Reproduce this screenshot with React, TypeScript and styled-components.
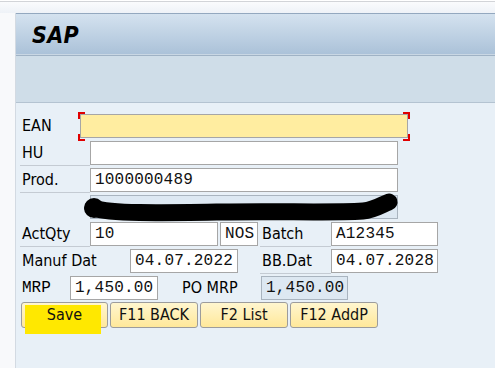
import React from "react";
import styled, { createGlobalStyle } from "styled-components";

const SANS = `"DejaVu Sans Condensed", "DejaVu Sans", "Liberation Sans", sans-serif`;
const MONO = `"Liberation Mono", "DejaVu Sans Mono", monospace`;

const Global = createGlobalStyle`
  html, body { margin: 0; padding: 0; background: #ffffff; overflow: hidden; }
`;

const Page = styled.div`
  width: 495px;
  height: 368px;
  box-sizing: border-box;
  padding-top: 1px;
  display: flex;
  flex-direction: column;
  background: #ffffff;
  font-family: ${SANS};
`;

const TopStrip = styled.div`
  height: 11px;
  border-top: 1px solid #d2d4d8;
  background: linear-gradient(#fafbfd, #eef2f7);
`;

const Main = styled.div`
  flex: 1;
  display: flex;
  min-height: 0;
`;

const Gutter = styled.div`
  width: 15px;
  background: #f8f9fb;
  border-right: 1px solid #d3dae2;
`;

const Content = styled.div`
  flex: 1;
  min-width: 0;
  display: flex;
  flex-direction: column;
  background: #e8f0f7;
`;

const TitleBar = styled.div`
  height: 41px;
  border-top: 1px solid #93a8bf;
  border-bottom: 1px solid #9fb2c5;
  box-shadow: inset 0 -1px 0 #c9d7e4;
  background: linear-gradient(#d4e2ef, #aac1d8);
  display: flex;
  align-items: center;
  padding-left: 16px;
`;

const Title = styled.span`
  font-family: ${SANS};
  font-weight: bold;
  font-style: italic;
  font-size: 23px;
  color: #000;
  letter-spacing: 0.3px;
`;

const Toolbar = styled.div`
  height: 46px;
  background: #cfdde8;
  border-bottom: 1px solid #b4c3d1;
`;

const Form = styled.div`
  display: flex;
  flex-direction: column;
  gap: 3px;
  padding: 11px 0 0 4px;
`;

const Row = styled.div`
  display: flex;
  align-items: flex-start;
  height: 24px;
`;

const Label = styled.div<{ w: number; line?: boolean; mono?: boolean }>`
  width: ${(p) => p.w}px;
  flex: none;
  box-sizing: border-box;
  height: 24px;
  padding-left: 2px;
  line-height: 24px;
  font-family: ${(p) => (p.mono ? MONO : SANS)};
  font-size: 16px;
  color: #000;
  white-space: nowrap;
  border-bottom: ${(p) => (p.line ? "1px solid #c4cbd3" : "none")};
  height: ${(p) => (p.line ? 25 : 24)}px;
`;

const Spacer = styled.div<{ w: number }>`
  width: ${(p) => p.w}px;
  flex: none;
`;

const Field = styled.div<{ w: number; tone?: "focus" | "read" | "plain" }>`
  position: relative;
  width: ${(p) => p.w}px;
  flex: none;
  height: 24px;
  box-sizing: border-box;
  border: 1px solid
    ${(p) => (p.tone === "read" ? "#a9b4bf" : "#a6a6a6")};
  background: ${(p) =>
    p.tone === "focus" ? "#ffeda0" : p.tone === "read" ? "#dde8f2" : "#ffffff"};
  font-family: ${MONO};
  font-size: 16px;
  letter-spacing: 0.2px;
  line-height: 22px;
  padding-left: 4px;
  color: #111;
  white-space: nowrap;
`;

const Corner = styled.span<{ v: "top" | "bottom"; h: "left" | "right" }>`
  position: absolute;
  width: 7px;
  height: 7px;
  ${(p) => (p.v === "top" ? "top: -3px;" : "bottom: -4px;")}
  ${(p) => (p.h === "left" ? "left: -3px;" : "right: -3px;")}
  border-${(p) => p.v}: 2px solid #e00000;
  border-${(p) => p.h}: 2px solid #e00000;
  box-sizing: border-box;
`;

const Scribble = styled.svg`
  position: absolute;
  left: -10px;
  top: -7px;
  width: 320px;
  height: 38px;
  overflow: visible;
`;

const ButtonRow = styled.div`
  display: flex;
  gap: 2px;
  padding-left: 1px;
  margin-top: -1px;
`;

const Button = styled.button<{ w: number }>`
  position: relative;
  width: ${(p) => p.w}px;
  height: 26px;
  box-sizing: border-box;
  padding: 0;
  border: 1px solid #9c9c9c;
  border-radius: 3px;
  background: linear-gradient(#fff6cf, #ffe89a);
  font-family: ${SANS};
  font-size: 16px;
  color: #111;
  line-height: 24px;
  text-align: center;
`;

const Highlight = styled.span`
  position: absolute;
  left: 3px;
  top: 2px;
  width: 76px;
  height: 29px;
  background: #ffe800;
`;

const ButtonText = styled.span`
  position: relative;
`;

export default function App() {
  return (
    <Page>
      <Global />
      <TopStrip />
      <Main>
        <Gutter />
        <Content>
          <TitleBar>
            <Title>SAP</Title>
          </TitleBar>
          <Toolbar />
          <Form>
            <Row>
              <Label w={60}>EAN</Label>
              <Field w={328} tone="focus">
                <Corner v="top" h="left" />
                <Corner v="bottom" h="left" />
                <Corner v="top" h="right" />
                <Corner v="bottom" h="right" />
              </Field>
            </Row>
            <Row>
              <Label w={70} line>HU</Label>
              <Field w={308} />
            </Row>
            <Row>
              <Label w={70} line>Prod.</Label>
              <Field w={308}>1000000489</Field>
            </Row>
            <Row>
              <Label w={70} />
              <Field w={308} tone="read">
                <Scribble viewBox="0 0 320 38">
                  <path
                    d="M 12 19 C 30 25, 80 24, 140 23 C 200 22, 250 24, 282 22 C 294 21, 302 15, 308 13"
                    fill="none"
                    stroke="#000"
                    strokeWidth={17}
                    strokeLinecap="round"
                  />
                  <circle cx={13} cy={19} r={10} fill="#000" />
                </Scribble>
              </Field>
            </Row>
            <Row>
              <Label w={70} line>ActQty</Label>
              <Field w={128}>10</Field>
              <Spacer w={2} />
              <Field w={38}>NOS</Field>
              <Spacer w={2} />
              <Label w={71} line>Batch</Label>
              <Field w={107}>A12345</Field>
            </Row>
            <Row>
              <Label w={110}>Manuf Dat</Label>
              <Field w={108}>04.07.2022</Field>
              <Spacer w={22} />
              <Label w={71} line>BB.Dat</Label>
              <Field w={107}>04.07.2028</Field>
            </Row>
            <Row>
              <Label w={50} mono>MRP</Label>
              <Field w={88}>1,450.00</Field>
              <Spacer w={22} />
              <Label w={81}>PO MRP</Label>
              <Field w={87} tone="read">1,450.00</Field>
            </Row>
            <ButtonRow>
              <Button w={87}>
                <Highlight />
                <ButtonText>Save</ButtonText>
              </Button>
              <Button w={88}>
                <ButtonText>F11 BACK</ButtonText>
              </Button>
              <Button w={88}>
                <ButtonText>F2 List</ButtonText>
              </Button>
              <Button w={88}>
                <ButtonText>F12 AddP</ButtonText>
              </Button>
            </ButtonRow>
          </Form>
        </Content>
      </Main>
    </Page>
  );
}
